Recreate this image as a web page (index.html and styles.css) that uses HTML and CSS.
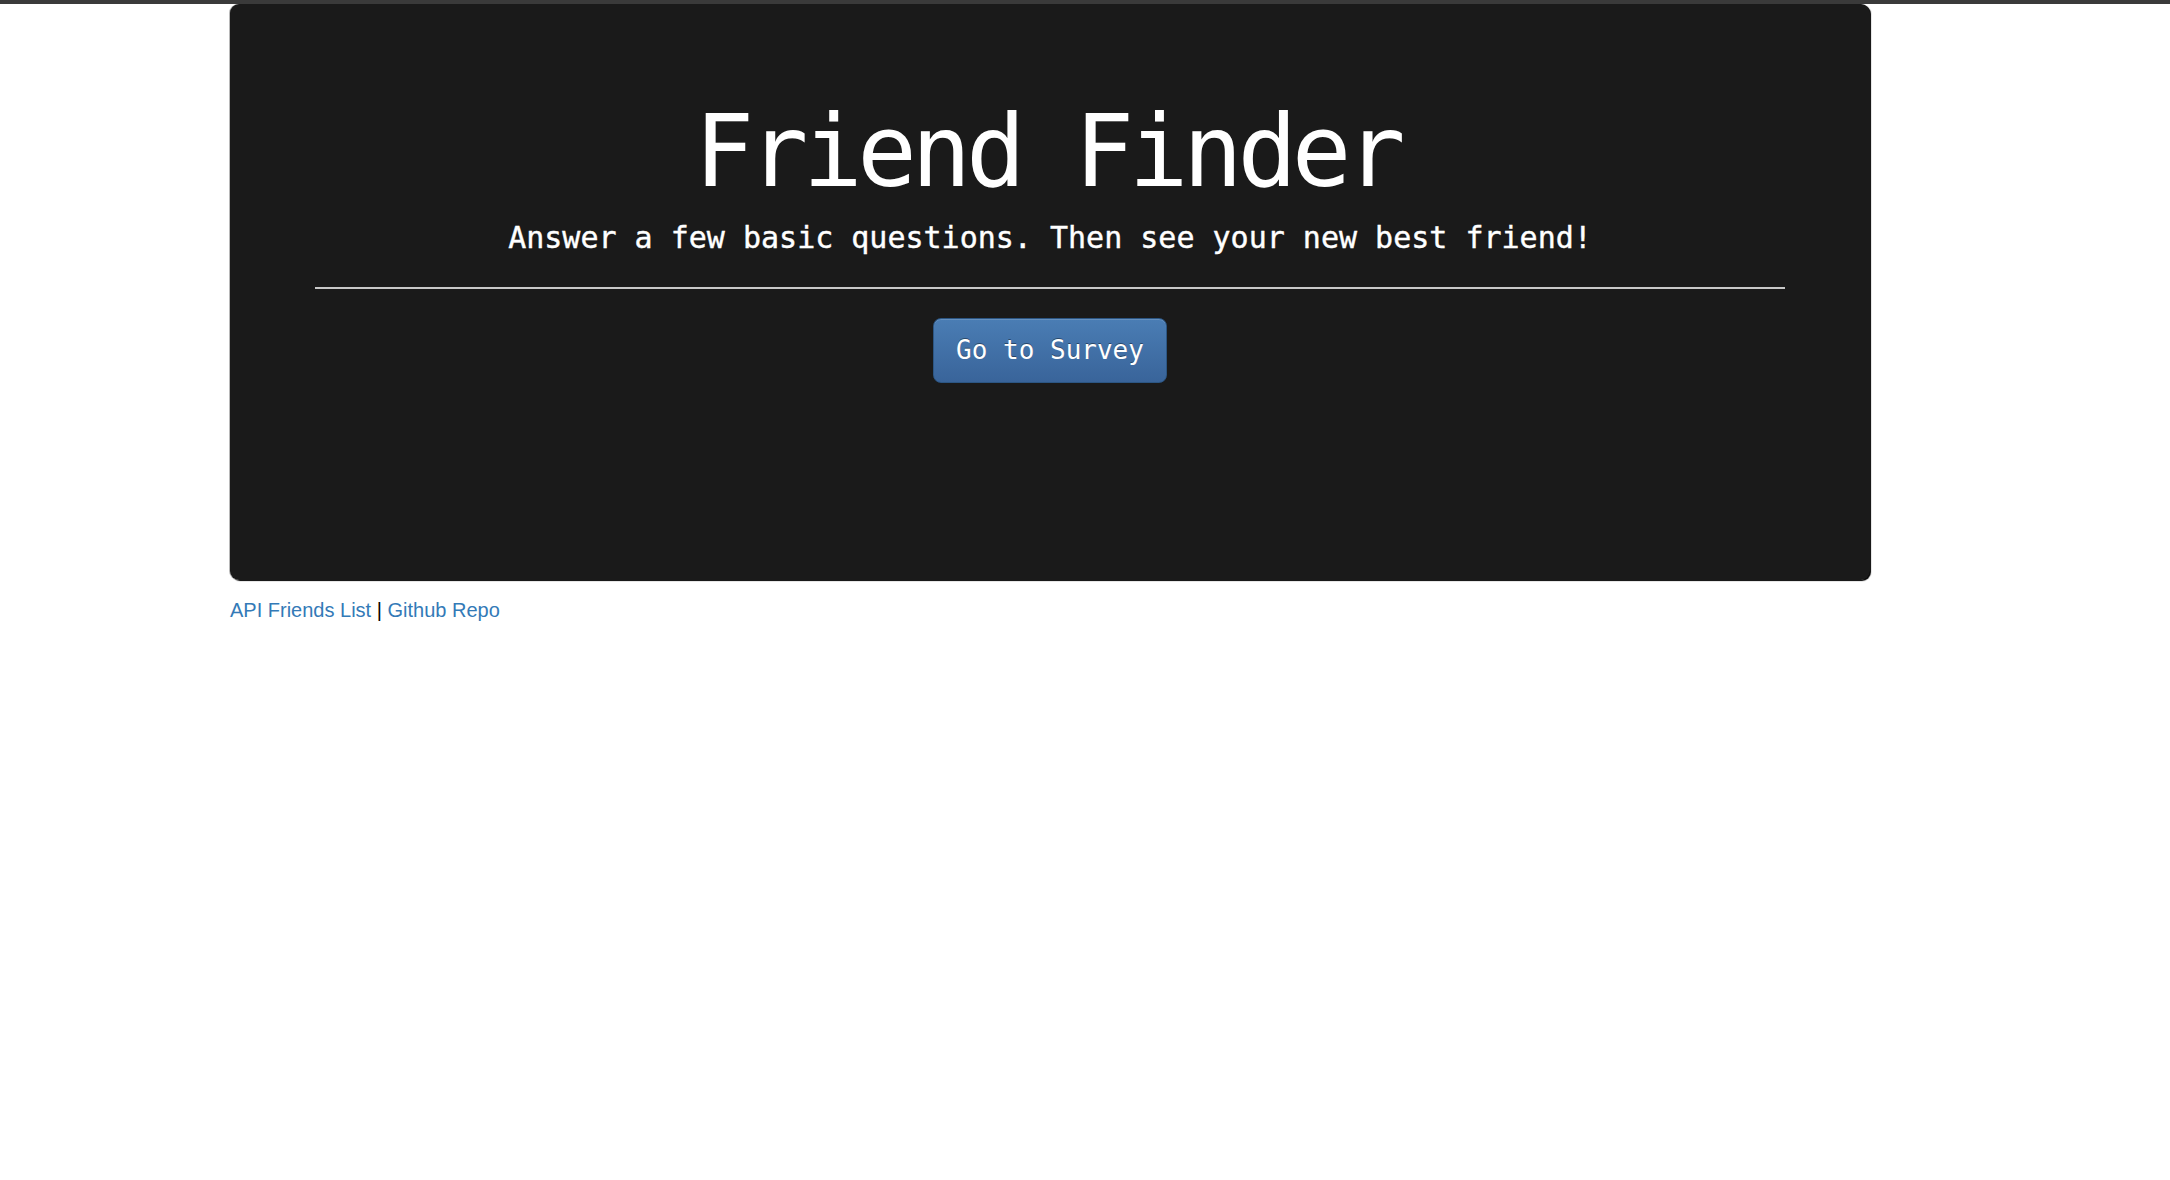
FILE: index.html
```html
<!DOCTYPE html>
<html lang="en">
<head>
<meta charset="utf-8">
<title>Friend Finder</title>
<link rel="stylesheet" href="styles.css">
</head>
<body>
<div class="topbar"></div>
<div class="container">
  <div class="jumbotron">
    <h1 class="title">Friend Finder</h1>
    <p class="lead">Answer a few basic questions. Then see your new best friend!</p>
    <hr class="divider">
    <a class="btn" href="#">Go to Survey</a>
  </div>
  <footer class="footer">
    <a href="#">API Friends List</a> | <a href="#">Github Repo</a>
  </footer>
</div>
</body>
</html>
```

FILE: styles.css
```css
html, body {
  margin: 0;
  padding: 0;
  background: #ffffff;
}
body {
  font-family: "Liberation Sans", Arial, sans-serif;
  font-size: 20px;
  color: #333333;
}
.topbar {
  height: 4px;
  background: #3a3a3a;
}
.container {
  width: 1640px;
  margin: 0 0 0 230px;
}
.jumbotron {
  background: #1a1a1a;
  border-radius: 9px;
  padding: 94px 85px 197px;
  display: flex;
  flex-direction: column;
  align-items: center;
  box-shadow: -1px 0 0 #b8b8b8, 1px 1px 1px #000;
  font-family: "DejaVu Sans Mono", monospace;
  color: #ffffff;
}
.title {
  margin: 0;
  font-size: 99px;
  line-height: 1.1;
  font-weight: normal;
  letter-spacing: -5.3px;
  text-indent: -5.3px;
}
.lead {
  margin: 10px 0 0;
  font-size: 30px;
  line-height: 1.4;
  -webkit-text-stroke: 0.4px #ffffff;
}
.divider {
  align-self: stretch;
  margin: 28px 0 29px;
  height: 0;
  border: 0;
  border-top: 2px solid #c8c8c8;
}
.btn {
  display: inline-block;
  font-size: 26px;
  line-height: 1.333;
  padding: 14px 22px;
  border: 1px solid #2c5683;
  border-radius: 8px;
  background: linear-gradient(to bottom, #4a7db4 0%, #39649a 100%);
  color: #ffffff;
  text-decoration: none;
  text-shadow: 0 -1px 0 rgba(0,0,0,0.4);
  box-shadow: inset 0 1px 0 rgba(255,255,255,0.15);
}
.footer {
  margin-top: 16px;
  line-height: 28px;
  color: #000;
}
.footer a {
  color: #337ab7;
  text-decoration: none;
}
```
